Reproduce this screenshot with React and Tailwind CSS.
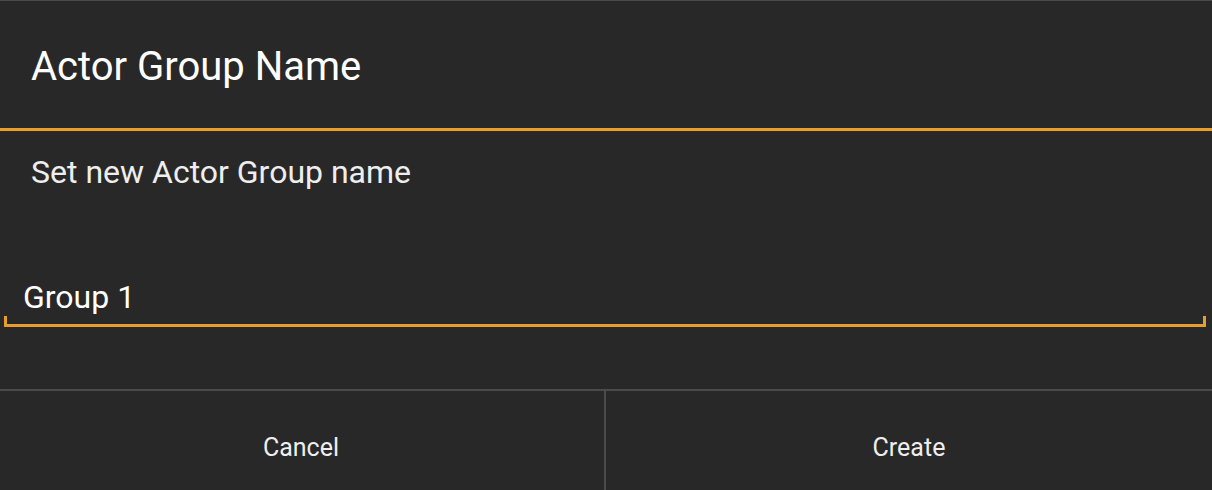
export default function App() {
  return (
    <div className="w-[1212px] h-[490px] bg-[#282828] flex flex-col overflow-hidden" style={{ fontFamily: "Roboto, 'Noto Sans', sans-serif" }}>
      <div className="h-px bg-[#4a4a4a]" />
      <div className="h-[127px] pl-[31px] pt-[46px]">
        <div className="text-[40px] text-white leading-none">Actor Group Name</div>
      </div>
      <div className="h-[3px] bg-[#e89e2c]" />
      <div className="h-px bg-[#3a2a14]" />
      <div className="pl-[31px] pt-[24px]">
        <div className="text-[32px] text-[#eeeeee] leading-none">Set new Actor Group name</div>
      </div>
      <div className="ml-[4px] mr-[6px] mt-[93px]">
        <div className="pl-[19px] text-[32px] text-white leading-none">Group 1</div>
        <div className="mt-[3px] h-[11px] border-l-[3px] border-r-[3px] border-b-[3px] border-[#e89e2c]" />
      </div>
      <div className="flex-1" />
      <div className="h-[2px] bg-[#4a4a4a]" />
      <div className="h-[99px] flex">
        <div className="w-[604px] flex items-center justify-center pt-[14px] pr-[2px] text-[25px] text-[#eeeeee]">Cancel</div>
        <div className="w-[2px] bg-[#4a4a4a]" />
        <div className="flex-1 flex items-center justify-center pt-[14px] text-[25px] text-[#eeeeee]">Create</div>
      </div>
    </div>
  );
}
